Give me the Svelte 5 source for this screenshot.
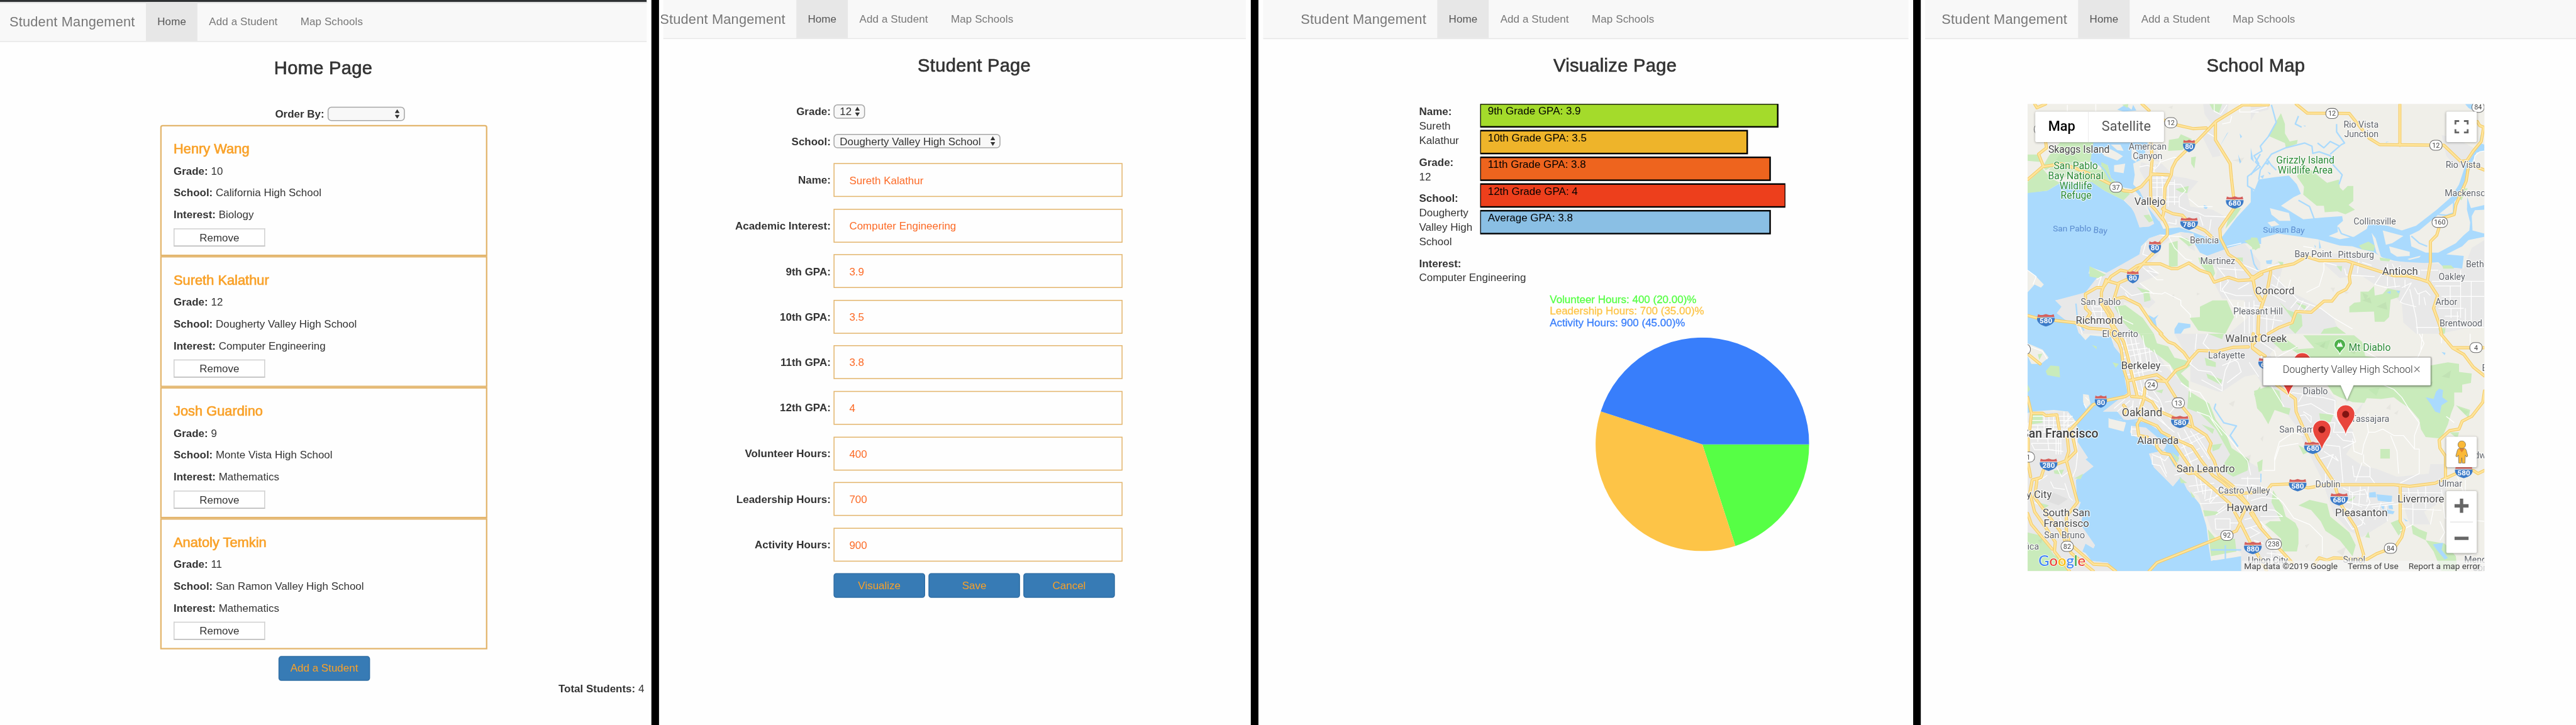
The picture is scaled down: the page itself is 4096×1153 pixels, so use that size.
<script>
  const tabs = ['Home', 'Add a Student', 'Map Schools'];

  const students = [
    { name: 'Henry Wang', grade: 10, school: 'California High School', interest: 'Biology' },
    { name: 'Sureth Kalathur', grade: 12, school: 'Dougherty Valley High School', interest: 'Computer Engineering' },
    { name: 'Josh Guardino', grade: 9, school: 'Monte Vista High School', interest: 'Mathematics' },
    { name: 'Anatoly Temkin', grade: 11, school: 'San Ramon Valley High School', interest: 'Mathematics' }
  ];

  const fields = [
    ['Name:', 'Sureth Kalathur'],
    ['Academic Interest:', 'Computer Engineering'],
    ['9th GPA:', '3.9'],
    ['10th GPA:', '3.5'],
    ['11th GPA:', '3.8'],
    ['12th GPA:', '4'],
    ['Volunteer Hours:', '400'],
    ['Leadership Hours:', '700'],
    ['Activity Hours:', '900']
  ];

  const facts = [
    ['Name:', 'Sureth Kalathur'],
    ['Grade:', '12'],
    ['School:', 'Dougherty Valley High School'],
    ['Interest:', 'Computer Engineering']
  ];

  const bars = [
    { label: '9th Grade GPA: 3.9', gpa: 3.9, fill: '#a4db2b' },
    { label: '10th Grade GPA: 3.5', gpa: 3.5, fill: '#eeb42a' },
    { label: '11th Grade GPA: 3.8', gpa: 3.8, fill: '#ee641e' },
    { label: '12th Grade GPA: 4', gpa: 4, fill: '#ed3f1c' },
    { label: 'Average GPA: 3.8', gpa: 3.8, fill: '#8abfe4' }
  ];

  const hours = [
    { name: 'Volunteer Hours', value: 400, fill: '#56ff45' },
    { name: 'Leadership Hours', value: 700, fill: '#fdc447' },
    { name: 'Activity Hours', value: 900, fill: '#387efb' }
  ];
  const total = hours.reduce((sum, h) => sum + h.value, 0);
  let turned = 0;
  const slices = hours.map((h) => {
    const a = (turned / total) * 2 * Math.PI;
    turned += h.value;
    const b = (turned / total) * 2 * Math.PI;
    const p = (t) => `${(100 * Math.cos(t)).toFixed(3)},${(100 * Math.sin(t)).toFixed(3)}`;
    return { fill: h.fill, d: `M0,0 L${p(a)} A100,100 0 ${b - a > Math.PI ? 1 : 0} 1 ${p(b)} Z` };
  });

  // The map is drawn in four sheets: a (north west), b (north east), c (south west), d (south east).
  const sheet = { a: 'translate(0 0)', b: 'translate(1440 0)', c: 'translate(0 1500)', d: 'translate(1440 1500)' };

  const terrain = [
    ['water', 'a', 'M36,612 160,600 240,552 300,542 350,560 440,545 520,600 640,660 690,710 720,760 740,830 800,825 832,808 790,700 730,620 700,590 640,580 560,520 540,440 430,440 430,296 790,296 800,340 760,400 700,430 710,500 700,560 740,600 800,690 850,740 870,800 890,840 990,830 1060,855 1180,900 1260,890 1350,770 1470,640 1475,590 1505,580 1505,935 1400,930 1300,960 1250,985 1180,1015 1120,990 1090,940 1080,870 1000,860 930,880 870,875 800,900 750,950 740,1000 690,1040 600,1080 540,1120 430,1080 420,1120 480,1150 470,1200 400,1240 330,1270 210,1290 250,1330 220,1370 270,1410 340,1440 360,1505 36,1505Z'],
    ['water', 'a', 'M600,90 650,60 690,90 700,60 720,95 640,102Z M1240,330 1290,240 1300,230Z M1370,240 1385,260 1375,270Z M1440,330 1460,420 1440,400Z M1360,370 1380,420 1370,430Z M1145,690 1170,700 1160,720 1145,710Z M1385,1030 1440,1100 1470,1180 1500,1190 1500,1170 1430,1070 1395,1025Z M795,1380 830,1400 860,1380 840,1410 850,1460 830,1450Z M960,1470 985,1430 1060,1440 1060,1460 1020,1470 1000,1500 960,1500Z'],
    ['water', 'b', 'M0,580 20,605 50,530 150,515 240,505 290,560 315,620 270,640 190,695 250,730 330,780 460,768 575,760 580,790 545,820 548,860 490,885 560,905 650,890 730,840 740,810 860,820 950,850 1040,820 1170,720 1260,640 1310,560 1350,440 1380,400 1440,300 1470,310 1470,350 1420,360 1385,440 1340,600 1280,670 1180,750 1060,850 1000,880 1010,950 1100,990 1180,990 1290,930 1340,880 1375,850 1380,800 1360,720 1362,640 1385,710 1470,690 1470,720 1410,722 1390,760 1395,850 1470,870 1470,890 1370,910 1330,950 1230,1000 1340,1010 1330,1090 1210,1080 1180,1050 1040,1060 900,1040 830,1020 770,985 700,970 640,950 560,945 420,905 280,885 170,870 60,900 0,925Z'],
    ['water', 'b', 'M1348,54 1400,54 1410,100 1370,80Z M95,1040 135,1035 130,1062 100,1060Z M430,905 442,960 430,965Z M400,940 410,950 405,962Z'],
    ['land', 'b', 'M120,710 240,740 250,790 180,790 130,750Z M105,800 150,790 180,815 130,825Z M830,850 960,885 890,930 850,940Z M760,865 785,900 820,1020 790,990Z M870,950 1000,985 1000,1010 920,1015 880,990Z M985,1030 1070,1008 1060,1020 1000,1035Z'],
    ['water', 'c', 'M36,-5 360,-5 400,40 430,10 480,15 560,20 580,80 620,130 640,220 650,300 665,370 640,410 560,460 510,490 600,490 700,545 740,555 730,520 790,560 880,620 960,690 990,760 1000,820 960,840 900,735 870,740 800,755 830,840 950,960 1000,900 1040,980 1120,1070 1160,1200 1175,1330 1190,1430 1380,1400 1380,1500 590,1500 540,1440 440,1430 400,1380 380,1370 400,1320 450,1350 460,1330 400,1270 370,1200 380,1150 350,1110 370,1060 345,1050 340,920 380,885 450,835 400,790 415,780 350,680 355,600 330,540 290,490 200,480 60,490 36,500Z'],
    ['land', 'a', 'M36,1100 90,1140 138,1190 120,1210 80,1190 36,1240Z M470,330 560,340 640,380 600,410 520,380Z M580,440 650,430 640,490 580,480Z M560,310 620,310 640,350 600,345Z M690,320 730,360 720,420 690,400Z'],
    ['land', 'c', 'M36,60 130,100 168,150 120,190 60,190 36,140Z M385,380 420,385 432,440 405,470 385,430Z M545,530 625,540 655,560 640,615 545,590Z'],
    ['urban', 'a', 'M820,440 880,430 960,510 1030,520 1110,540 1040,620 1060,700 1200,720 1290,770 1250,900 1180,900 1040,830 930,820 860,790 790,700 740,600 780,540 740,470 750,420Z'],
    ['urban', 'a', 'M640,650 690,610 780,710 832,808 800,825 740,830 700,720Z M1140,54 1300,54 1290,130 1200,190 1150,120Z M1130,250 1210,200 1250,380 1200,390 1170,330Z M770,310 830,320 870,420 780,400Z'],
    ['urban', 'a', 'M750,960 800,900 860,880 940,900 870,950 860,1000 790,1070 860,1130 740,1180 790,1250 840,1300 800,1340 640,1300 660,1400 750,1500 360,1500 340,1440 270,1410 220,1370 250,1330 210,1290 400,1240 470,1150 600,1080 740,1000Z'],
    ['urban', 'a', 'M1150,1015 1300,960 1400,930 1500,1050 1500,1500 1300,1500 1420,1400 1400,1290 1260,1280 1210,1180 1230,1100Z M990,860 1070,870 1090,980 1050,960Z'],
    ['urban', 'b', 'M0,1130 110,1090 170,1045 200,1080 180,1160 240,1230 420,1320 520,1400 560,1500 0,1500Z'],
    ['urban', 'b', 'M420,990 640,1000 820,1040 1180,1060 1210,1080 1340,1090 1390,960 1470,910 1470,1460 1380,1460 1190,1500 1040,1500 960,1430 950,1310 850,1200 780,1190 690,1130 560,1150 460,1060Z M1200,250 1290,270 1400,330 1350,420 1300,460 1230,380Z M0,54 120,54 110,90 30,110 0,160Z'],
    ['urban', 'c', 'M36,500 60,490 290,490 355,600 350,680 415,780 400,790 450,835 340,920 345,1050 370,1060 350,1110 380,1150 370,1200 460,1330 450,1350 400,1320 380,1370 440,1430 540,1440 590,1494 36,1494Z'],
    ['urban', 'c', 'M570,0 760,0 830,80 900,200 1000,300 1080,400 1040,450 1200,560 1300,700 1420,800 1500,850 1500,1494 1380,1494 1380,1380 1200,1250 1120,1070 1040,980 1000,900 950,960 830,840 800,755 870,740 900,735 960,840 990,760 960,690 880,620 790,560 640,540 600,490 510,490 665,370 640,220 620,130 580,80Z M690,580 780,590 910,700 890,735 700,640 680,620Z'],
    ['urban', 'c', 'M960,0 1500,0 1500,250 1400,270 1250,370 1060,300 1060,180Z'],
    ['land', 'c', 'M1060,340 1200,360 1290,370 1400,270 1500,280 1500,790 1440,790 1330,700 1230,560 1180,440Z M1120,1075 1060,990 1110,1020 1180,1200 1170,1240Z'],
    ['urban', 'd', 'M0,0 220,0 120,130 200,300 280,340 470,340 540,420 520,520 640,600 650,680 600,760 700,830 790,850 920,900 1120,880 1130,820 1230,820 1230,1000 1160,1080 1090,1120 1130,1200 1000,1200 960,1080 900,1070 860,1180 700,1280 620,1240 520,1130 440,900 350,720 300,600 190,450 60,300 0,200Z'],
    ['urban', 'd', 'M0,900 60,980 130,1000 180,1160 60,1180 100,1300 250,1494 0,1494Z M640,510 710,430 680,500Z'],
    ['green', 'a', 'M36,372 110,372 125,420 36,412Z M240,296 450,296 445,330 430,420 240,420 150,470 130,450 170,380Z M36,545 130,460 180,520 240,550 160,600 36,615Z M350,440 500,470 500,420 540,440 560,520 680,620 640,660 520,600 440,545 360,540Z'],
    ['green', 'a', 'M925,280 985,270 1000,245 1070,275 1010,345 920,350Z M1065,390 1095,385 1085,460 1065,430Z M965,590 1050,570 1040,615 1000,610Z M765,755 800,750 825,790 800,800Z M925,930 980,915 980,1075 925,1080Z M1110,1020 1190,1030 1215,1120 1200,1150 1120,1060Z M425,1075 530,1130 480,1150 425,1140Z M720,1205 800,1230 810,1290 770,1300 765,1250Z M580,1330 650,1320 760,1400 830,1500 700,1500 640,1430Z'],
    ['green', 'a', 'M1120,1330 1200,1290 1290,1290 1335,1395 1280,1500 1110,1480 1055,1400 1120,1395Z M1400,915 1480,895 1500,950 1470,975Z M1180,54 1260,54 1240,110 1200,90Z M1330,710 1380,710 1340,770 1280,840 1300,770Z M985,895 1040,900 1075,940 1050,950Z M1350,1020 1390,1020 1390,1050Z M630,60 670,54 665,80Z'],
    ['green', 'b', 'M190,112 215,180 215,240 245,290 295,280 290,305 220,330 215,300 110,255 150,180Z M290,510 340,440 480,550 555,530 560,580 580,600 610,570 645,570 645,665 615,690 655,720 595,748 545,730 465,735 460,695 415,695 330,625 335,575Z M680,945 740,920 780,945 775,980 700,970Z'],
    ['green', 'b', 'M690,1235 740,1235 775,1200 780,1260 830,1250 860,1215 940,1230 930,1270 880,1285 870,1395 840,1425 780,1425 775,1360 620,1365 620,1330 650,1305 690,1300Z M180,1300 230,1350 320,1380 325,1450 280,1500 240,1460 265,1410Z M0,895 30,895 60,960 10,970Z M460,1470 540,1455 600,1500 440,1500Z M540,1075 575,1075 570,1110Z M810,1020 880,1030 870,1045 815,1040Z M1205,1070 1260,1070 1280,1090 1210,1090Z M1340,585 1365,585 1325,660 1310,650Z M1180,1465 1225,1465 1220,1500 1190,1500Z M280,1300 350,1325 340,1350Z M170,1045 205,1050 200,1080Z'],
    ['green', 'c', 'M740,0 830,0 850,60 920,80 960,150 1040,170 1060,200 1000,250 1050,300 1050,350 1000,300 930,190 850,130 780,80Z M1050,360 1180,440 1220,540 1280,620 1320,720 1430,790 1420,860 1330,900 1260,860 1270,820 1310,760 1220,600 1120,500 1040,470Z M150,235 180,200 235,205 240,275 160,260Z M50,490 130,500 130,560 60,570Z'],
    ['green', 'c', 'M36,1250 120,1270 200,1390 280,1440 290,1494 36,1494Z M990,900 1040,940 1000,940Z M1060,990 1090,1030 1070,1030Z M1140,1110 1230,1120 1240,1135 1150,1150Z M1170,1230 1220,1290 1340,1290 1350,1370 1190,1400Z M1195,700 1260,690 1240,725 1200,740Z M1150,150 1220,180 1220,210 1160,200Z M1160,250 1260,290 1250,320 1170,280Z M1500,330 1500,480 1460,380Z M36,320 52,350 36,370Z M1130,570 1210,600 1200,630Z M100,1060 170,1080 130,1110Z M440,70 470,80 470,98Z M330,910 385,880 370,915Z M570,180 610,190 590,215Z M100,130 130,125 110,165Z M940,745 990,780 980,810Z M1170,0 1270,0 1260,35Z M840,360 890,350 880,375Z M200,860 265,855 250,885 205,880Z'],
    ['green', 'd', 'M330,10 650,10 700,50 720,140 1130,200 1240,180 1310,190 1310,240 1390,250 1385,310 1330,320 1330,370 1280,370 1280,450 1260,500 1240,570 1200,660 1100,650 1070,600 1060,540 1000,470 940,430 900,400 820,410 730,405 715,435 640,430 560,400 520,380 480,320 400,300 330,150 260,100 400,90Z M20,360 110,330 180,360 200,460 250,470 240,510 150,480 110,570 70,500 40,470Z M110,30 200,20 300,90 200,110Z'],
    ['green', 'd', 'M430,500 520,510 500,560 440,560Z M300,700 370,740 330,760Z M815,725H875V785H815Z M140,985 200,1080 220,1150 280,1190 300,1230 300,1320 290,1370 200,1370 190,1290 90,1200 120,1180 190,1180 130,1060Z M300,1080 370,1045 480,1070 500,1150 560,1200 620,1250 660,1330 640,1400 560,1300 470,1240 440,1180 380,1110Z M880,1190 940,1165 960,1230 930,1270Z M1010,1200 1060,1230 1110,1250 1100,1300 1020,1260Z M1100,1300 1220,1320 1290,1400 1300,1494 1200,1494 1150,1370Z M1290,450 1380,480 1370,530Z M1250,620 1310,620 1300,660Z M720,1280 740,1245 750,1285Z M40,810 75,790 70,860 50,870Z M610,1050 660,1020 640,1050Z'],
    ['dark', 'a', 'M240,370 330,380 410,470 250,520 170,470Z'],
    ['dark', 'd', 'M400,60 500,40 480,100Z M740,350 810,340 790,390Z M1300,460 1370,490 1350,510Z'],
    ['shade', 'b', 'M700,1290 750,1270 760,1310Z M790,1330 850,1300 860,1350Z M500,1210 530,1210 520,1240Z M580,1230 620,1240 600,1250Z M720,1290 700,1240 740,1260Z'],
    ['shade', 'a', 'M940,1260 960,1250 955,1280Z M1100,1240 1120,1250 1100,1260Z M920,75 950,65 945,85Z M1320,410 1400,390 1380,420Z'],
    ['shade', 'd', 'M430,80 470,50 460,90Z M620,110 680,90 650,130Z M850,470 880,440 880,480Z M1090,320 1150,300 1130,330Z M900,500 930,480 920,510Z M60,660 80,640 75,680Z M800,280 860,250 850,300Z M1200,270 1260,230 1250,280Z M540,1370 600,1340 580,1400Z M340,1330 370,1320 350,1350Z'],
    ['shade', 'c', 'M150,1050 200,1000 290,1040 230,1080Z M100,1300 130,1290 120,1320Z M1400,780 1440,760 1430,840Z M1300,440 1340,420 1330,460Z'],
    ['water', 'd', 'M1100,400 1150,410 1165,365 1185,345 1210,355 1205,400 1240,425 1200,450 1190,500 1160,490 1130,440Z M745,1000 785,995 790,1030 745,1030Z M790,1010 890,1020 885,1060 800,1050Z M810,1075 840,1085 835,1110Z M865,1075 890,1078 895,1105 868,1100Z M845,1105 905,1118 895,1135 850,1130Z M1145,1325 1210,1315 1200,1360 1240,1410 1220,1420 1170,1360Z M1200,115 1225,120 1220,135Z M60,880 68,880 66,935 60,935Z M960,1160 990,1180 975,1180Z'],
    ['water', 'b', 'M855,1240 880,1230 880,1250Z M915,1230 940,1230 930,1248Z M330,190 345,190 343,197Z M850,293 870,290 850,298Z M90,430 120,410 110,440Z M60,510 85,500 75,525Z M105,480 125,490 120,500Z']
  ];

  const creeks = [
    ['b', 'M50,530 60,470 130,370 220,330 340,300 385,320 390,365 430,355 500,380 520,440 575,500 555,560'],
    ['b', 'M130,60 160,170 110,260 60,320 70,350 20,380 50,430 0,500'],
    ['b', 'M500,370 570,310 590,300 540,230 540,180'],
    ['b', 'M1470,330 1440,300 1450,250'],
    ['b', 'M300,130 280,180 320,200'],
    ['b', 'M420,300 460,330 500,290 560,320'],
    ['b', 'M100,400 130,440 160,470'],
    ['b', 'M1010,885 1060,930 1110,950'],
    ['b', 'M300,660 370,700 400,780'],
    ['b', 'M550,830 570,870 640,895'],
    ['b', 'M1276,670 1276,740 1230,755 1180,750'],
    ['b', 'M0,970 20,1060 50,1110'],
    ['a', 'M470,420 520,470 560,540'],
    ['a', 'M560,330 640,380 680,470 700,590'],
    ['a', 'M1500,370 1470,420 1500,450 1420,510 1420,570 1470,600'],
    ['a', 'M340,1310 350,1410 390,1480'],
    ['a', 'M200,1170 290,1150'],
    ['c', 'M1220,440 1210,470 1270,560 1350,580 1310,640 1360,710'],
    ['c', 'M550,530 640,550 740,540'],
    ['c', 'M1190,1360H1380M1200,1430H1370M1280,1330V1490']
  ];

  const streets = [
    ['a', 'M820,520H940M820,550H960M820,580H900M820,640H980M900,670H990M840,440 830,480 900,520M880,500 900,800M850,510V700M920,520V700M960,530V690M910,560H1000L1030,600 990,640V700L1050,730 1110,740 1150,760 1290,765M1050,650 1110,700 1200,700M1190,780 1180,850M920,800 970,810 970,780M1120,760 1140,820'],
    ['a', 'M740,450 790,440 840,460 860,440 870,420 960,390 1000,400M860,320 870,420M286,60V100M465,54V100M1210,54V100L1250,120 1290,60M1260,180 1310,170 1320,130M1370,54V105H1490M1160,230 1210,260'],
    ['a', 'M920,880 960,960 1030,1030 1070,1040M880,880 1000,890 1080,930M780,930 760,1000 820,1020M760,1080 850,1160 890,1160M780,1100 860,1120 800,1080M470,1160 500,1140 480,1200'],
    ['a', 'M430,1300 470,1410M450,1330H530M440,1360H540M450,1400H550M500,1330V1440M620,1200 690,1260 780,1240 880,1250 900,1240 1000,1290 1000,1320 1060,1380 1060,1400M740,1180 830,1250M600,1330 620,1400 700,1440M360,1440 380,1500M650,1240 690,1300'],
    ['a', 'M1230,1080 1300,1170 1260,1220 1330,1330 1400,1400M1250,1230 1350,1260 1450,1260M1340,1080 1350,1160M1240,1090 1400,1100M1250,1170 1250,1230M1360,1220 1430,1180M1330,1330 1480,1340M1360,1300 1350,1400M1400,1300V1500M1430,1300V1500M1460,1290V1500M1380,1060 1500,1110'],
    ['a', 'M36,1100 90,1140 70,1190M1290,950 1380,930'],
    ['b', 'M100,1110 110,1080 180,1060M140,1130 250,1240 300,1290 440,1340 520,1400 640,1470M130,1190 240,1250M180,1140 160,1220M250,1160 230,1240M300,1280 250,1340M330,1290 280,1380M370,1320 330,1360M110,1240 220,1300M20,1320 160,1340M60,1400 200,1420M100,1330V1500M150,1380 130,1500M460,1050V1100L430,1200 350,1240M330,950 390,960 400,990M460,1050 540,1070'],
    ['b', 'M590,1090 600,1130 780,1140M680,1040 670,1120M700,1050 760,1070M860,1060V1110M890,1060 910,1100H1060V1130M940,1070V1110M820,1130 780,1190 850,1210 940,1200M860,1140V1200M900,1140 910,1210M950,1210 1010,1180 940,1300 960,1310 1040,1330M970,1160V1210M1030,1210 1050,1250 1100,1230 1130,1260M1000,1220 1040,1400 1050,1500M1060,1250V1320M1090,1270 1100,1320'],
    ['b', 'M1070,1100H1180M1140,1170H1470M1160,1200H1320M1200,1265H1470M1180,1340H1340M1230,1460H1470M1040,1460H1190M1190,1170V1100M1255,1200V1330M1320,1100V1400M1387,1170V1460M1260,1340V1400M1300,1360V1460M1350,1340V1440M1220,1390H1310'],
    ['b', 'M1400,440 1410,380 1440,355 1470,350M0,100 100,75 110,54'],
    ['c', 'M650,30 740,400M680,10 770,400M620,60 640,180M710,20 790,380M610,80 740,60M630,110 790,90M640,150 820,110M650,220 860,180M660,260 850,220M760,10 790,200 880,240M740,100 760,250M800,90 820,240M830,100 870,200 930,200 950,260M1000,310 1060,350 1060,400M780,290 740,440M820,350 870,420 900,500M700,420 690,530M720,350 860,430M800,400 1000,600M740,440 960,620M840,500 930,600M930,500 980,440M900,430 960,420M580,470 650,410M600,490 680,420M630,510 700,450'],
    ['c', 'M980,620 1080,850M1020,600 1130,800M1060,610 1180,790M1100,640 1190,780M1000,720 1160,640M1020,770 1120,720M1050,810 1140,770M980,680 1130,620M1090,880 1110,990M1120,900 1140,1010M1160,930 1150,1040M1200,960 1180,1060M1240,1000 1180,1070M1050,960 1210,940M1080,1000 1250,970M1120,1070 1290,1060M1150,1050 1260,1010M1220,820 1140,870M960,890 1050,870'],
    ['c', 'M1215,1165H1310V1230H1220ZM1310,1190H1360M1400,1170 1480,1150M1400,1230 1500,1200M1420,1290 1500,1250M1430,1100 1500,1080M1330,1070 1220,1140M1280,1080 1230,1120M1420,1040V900M1380,910H1500M1330,950 1500,960M690,580V640H740M690,600H740M780,640 850,690M820,760 870,780 900,800 930,760M820,770V820L870,830 910,900M870,770 910,880'],
    ['c', 'M1050,350 1120,370 1160,430 1200,540 1290,640 1370,740 1420,800 1440,890M1100,490 1180,520 1260,640M1060,190 1110,230 1190,240 1260,330 1280,230 1320,150 1360,180 1380,240 1290,310M1090,110 1060,190M1170,0 1140,60 1180,100M1100,0 1090,100M1260,200 1380,150M1260,330V360L1130,290'],
    ['c', 'M50,520H320M60,545H330M50,575H300M50,600H290M130,620H280M40,660H220M60,690H250M140,510V620M170,500V640M200,500V640M60,690 80,730 200,730M160,640 170,730 260,740M265,490V590M290,500V580M310,520 270,560M340,550 280,590M340,660 350,760 340,850 320,900M215,660V760M230,660V760M245,660V760M220,840 250,900 290,870M160,890 100,930M180,930 200,970 270,980M270,940 300,1030 320,1050M80,1060 160,1110 220,1120 260,1200M140,1220 200,1260 270,1250M40,560V690M100,580V680'],
    ['c', 'M1430,180 1490,270M400,400 420,420M390,440 405,470M50,80 130,110 160,160'],
    ['d', 'M60,130 160,320 260,380M30,30 150,110 160,150 290,80M280,460 380,440 480,500 530,510M300,430 330,380 260,370M330,490 380,520 380,560M290,520 340,510 380,560M350,390 450,400 530,420V520L560,570M130,330 210,460M480,560 530,560 520,620 640,620 660,680 620,700 580,720M540,630 580,670 650,680M560,710 580,940M430,790 520,760 480,850M460,740 550,800 530,770M500,650 440,700M470,700 560,710M470,880V940'],
    ['d', 'M640,660 650,740 700,760 710,700 740,620 730,540 740,500M740,620 780,620 830,600 900,640 960,640 1010,700 1030,725 1060,725V880L940,940M880,640 920,740 930,880M710,760V810L750,840V900M640,830 650,900H750L780,940M700,810 660,930M330,640 270,620 180,680 150,780 150,860 80,860M150,800 180,710 300,690M830,320 900,350 950,400 1000,480 1060,560 1030,640V720M1230,520 1280,560M700,100 830,170 1050,150 1090,60 1060,0M1080,0 1070,100M1230,60 1210,10M1200,0V60M1380,0V80'],
    ['d', 'M580,970 640,1000 640,1090 610,1130M600,1060 720,1080 900,1060M640,1000 720,980 750,1060 720,1110 700,1200 640,1230M580,1090 650,1120 720,1200M620,960V1010H720M690,960 680,1080M740,960 730,1060M760,1090 930,1070M850,1080 860,1180M820,1060 780,1170M580,1140 640,1230M560,1040 700,1090M940,1100 1200,1110M990,960 1000,1050M1020,1050V1200L940,1240M1050,980 1060,1060M1100,960V1100M940,1000H1200M1150,1100 1130,1200M1200,980 1220,1160 1470,1180M1300,900 1340,1000 1420,1010M1350,920V1050'],
    ['d', 'M0,950 60,960 130,1000 200,1060 270,1160 370,1200 450,1280 450,1390M0,1050 70,1030 180,1040M0,1100 150,1110 200,1150 60,1150M60,1180 110,1240M0,1220 50,1250M20,1300 80,1320M100,1380 200,1390M90,1400V1494M130,1370V1494M30,1420 230,1410M1190,1180 1220,1250 1190,1300M1360,1400 1430,1380']
  ];

  const highways = [
    ['a', 'M80,54 95,78 150,54M150,296 155,330 105,370 135,445 36,530M135,448 250,430 340,460 440,500 560,560 640,600 690,605 750,575 820,495 925,500M755,54 800,95M812,300 820,400 808,520 812,690 840,720 885,780M890,155 990,190 1080,210 1160,205'],
    ['a', 'M1500,60H1390L1220,165 1100,290 1035,345 970,410 945,460 940,500 900,580 895,720 885,770 915,830V880L870,925 830,990 760,1060 700,1130M760,1060 720,1075 670,1110 620,1100 560,1140 510,1210 470,1210 400,1250V1340L430,1370 400,1420M530,1160 500,1240V1310L545,1380 560,1440 590,1500M520,1300 570,1380V1440L610,1500M530,1165 600,1185M680,1150 610,1180 580,1280M590,1280 640,1270 740,1320 820,1440 880,1500'],
    ['a', 'M760,1060 870,1060 940,1090H980L1050,1055 1120,1100 1180,1120 1210,1175 1300,1145 1360,1165 1450,1160 1510,1125M1218,170V280L1310,430 1318,520 1332,640 1335,710 1245,840 1250,900 1300,1000 1360,1040 1455,1155 1470,1240 1500,1290M885,715 950,745 1010,755 1060,810 1150,850 1200,895M36,1385 110,1405 330,1430 420,1465 540,1475 600,1500M1490,1370 1485,1500'],
    ['b', 'M0,60H110M285,54 355,112 620,114 745,270 810,310 1215,314 1320,415 1360,410 1400,350 1450,290 1465,200 1440,190 1425,165M938,54V315M1370,430 1470,470M1370,440 1355,540 1290,690 1280,750 1200,775M1185,830 1170,880 1130,920V1050L1110,1170'],
    ['b', 'M0,1155 60,1115 150,1085 270,1060 350,1015 430,1040 600,1040 820,1110 900,1135 980,1135 1060,1155 1120,1175 1175,1260 1150,1340 1190,1450 1200,1500M10,1140 25,1220 75,1300 50,1380 45,1500M125,1110 105,1220 65,1340M640,1060 620,1140 625,1180 600,1220 550,1245 510,1295H460L380,1365 285,1360 260,1430 180,1460 110,1500'],
    ['c', 'M590,0 625,100 640,220 665,300 675,380 650,395 530,420 450,445 350,555 300,610M560,0 610,60 625,100M610,0 640,50 665,140 690,250 725,390M670,295 850,258 910,300 970,230 1030,205 1060,160 1110,105 1230,110 1330,85 1425,83M775,340 765,420 735,500M750,530 725,570 735,640 790,650M870,0 920,50 960,65 1020,120 1055,170M850,295 905,300 985,430 1060,520 1075,585 1160,640 1190,690 1175,740 1210,800 1240,890 1330,960 1420,1070M640,450 655,470 645,500'],
    ['c', 'M690,395 760,400 820,430 850,480 950,525 1060,585M740,535 850,580 880,620 960,660 1070,710 1130,800 1200,890 1270,940 1370,1030 1420,1080M950,680 1080,870 1200,970 1310,1070 1370,1180 1440,1320 1490,1400M1370,1180 1420,1070 1500,1210M1375,1190 1350,1240 1240,1285 850,1440 800,1494M845,680 850,715 880,750 930,760 980,840 1050,880 1180,860M1240,1000 1320,1010 1500,995M1490,40 1450,40V90L1500,130'],
    ['c', 'M300,600 320,650 340,740 280,800 350,1060 280,1150V1240L300,1320 450,1450 540,1455 590,1494M285,650 295,740 275,800 220,820M135,860 120,905 65,920 50,1000 80,1120 150,1220 210,1310 205,1370 260,1440 300,1494M95,920 80,1030 240,1240 310,1380 450,1494M36,1130 60,1200 190,1355M36,800 55,900M36,400 60,500H130L150,515 220,510 235,600M60,500 50,600M40,130 115,190M40,660V750'],
    ['d', 'M15,0 10,85 90,140M160,320 280,410 285,490 370,680 420,780 520,930 570,1080 660,1220 710,1390 700,1440M0,1000 100,990 130,950 240,945 360,970 480,950H900L1000,960 1160,940 1290,880 1400,860 1430,880 1470,860M1195,0 1270,90 1340,130 1400,210 1470,265M1270,88H1470M1470,360 1460,430 1390,520 1330,550 1310,600 1250,610 1185,670 1190,720 1225,770V910'],
    ['d', 'M940,960V1180L965,1220 950,1280 910,1340 790,1385 730,1420 520,1410 480,1425 430,1410 400,1450M0,1130 60,1220 140,1310 260,1440M0,1320 50,1400 100,1494M20,60 60,10']
  ];

  const interstates = [
    ['80', 1052, 318], ['680', 1339, 674], ['780', 1052, 808], ['80', 837, 956], ['80', 698, 1144], ['580', 151, 1415],
    ['80', 497, 1927], ['580', 994, 2055], ['280', 168, 2324], ['880', 1453, 2848], ['680', 1543, 1690],
    ['680', 1831, 2218], ['580', 1735, 2453], ['680', 1996, 2542], ['580', 2780, 2370]
  ];
  const routes = [
    ['12', 937, 172], ['37', 592, 578], ['12', 1951, 114], ['12', 2605, 314], ['84', 2870, 75], ['160', 2629, 799],
    ['24', 814, 1822], ['13', 984, 1935], ['92', 1290, 2769], ['82', 285, 2838], ['1', 41, 2276], ['', 15, 1598],
    ['4', 2857, 1587], ['238', 1584, 2824], ['84', 2319, 2850], ['', 116, 214]
  ];

  // text, centre x, baseline y, style
  const places = [
    ['Skaggs Island', 359, 362, 'mid'],
    ['San Pablo', 339, 464, 'park'], ['Bay National', 339, 527, 'park'], ['Wildlife', 339, 590, 'park'], ['Refuge', 341, 652, 'park'],
    ['American', 791, 342, 'town'], ['Canyon', 791, 400, 'town'], ['Vallejo', 806, 689, 'city'],
    ['Benicia', 1148, 930, 'town'], ['Martinez', 1232, 1062, 'town'], ['San Pablo', 496, 1317, 'town'],
    ['Richmond', 487, 1436, 'city'], ['El Cerrito', 618, 1521, 'town'], ['Concord', 1591, 1250, 'city'],
    ['Pleasant Hill', 1486, 1380, 'town'], ['Rio Vista', 2134, 205, 'town'], ['Junction', 2136, 262, 'town'],
    ['Grizzly Island', 1783, 429, 'park'], ['Wildlife Area', 1783, 491, 'park'], ['Rio Vista', 2776, 457, 'town'],
    ['Mackenson', 2804, 634, 'town'], ['Collinsville', 2220, 812, 'town'], ['Bay Point', 1833, 1019, 'town'],
    ['Pittsburg', 2102, 1023, 'town'], ['Antioch', 2379, 1131, 'city'], ['Bethel', 2872, 1083, 'town'],
    ['Oakley', 2705, 1160, 'town'], ['Arbor', 2671, 1320, 'town'], ['Brentwood', 2762, 1452, 'town'],
    ['Walnut Creek', 1473, 1551, 'city'], ['Lafayette', 1288, 1656, 'town'], ['Berkeley', 748, 1722, 'city'],
    ['Oakland', 756, 2020, 'big'], ['San Francisco', 239, 2154, 'metro'], ['Alameda', 856, 2192, 'city'],
    ['San Leandro', 1156, 2373, 'city'], ['Castro Valley', 1398, 2504, 'town'], ['Hayward', 1417, 2618, 'city'],
    ['Daly City', 60, 2535, 'city'], ['South San', 280, 2649, 'city'], ['Francisco', 280, 2716, 'city'],
    ['San Bruno', 268, 2785, 'town'], ['Pacifica', 8, 2858, 'town'], ['Union City', 1548, 2946, 'town'],
    ['Diablo', 1846, 1881, 'town'], ['Tassajara', 2191, 2055, 'town'], ['San Ramon', 1762, 2124, 'town'],
    ['Dublin', 1925, 2468, 'town'], ['Pleasanton', 2136, 2648, 'city'], ['Livermore', 2510, 2561, 'city'],
    ['Ulmar', 2696, 2464, 'town'], ['Midway', 2880, 2286, 'town'], ['Sunol', 2090, 2943, 'town'], ['Mendenhall', 2928, 2943, 'town'], ['Springs', 2930, 2992, 'town'],
    ['Mt Diablo', 2188, 1607, 'park'], ['By', 2925, 1736, 'town']
  ];

  const pins = [[1764, 1814], [1677, 1897], [2037, 2142], [1887, 2238]];
</script>

{#snippet nav()}
  <nav>
    <span class="brand">Student Mangement</span>
    {#each tabs as tab, i}
      <span class="tab" class:active={i === 0}>{tab}</span>
    {/each}
  </nav>
{/snippet}

{#snippet arrows()}
  <svg class="arrows" viewBox="0 0 10 20"><path d="M5 0 10 8H0ZM5 20 0 12H10Z" /></svg>
{/snippet}

<div class="stage">
  <div class="board">
    <section class="page home">
      <div class="strip"></div>
      {@render nav()}
      <h1>Home Page</h1>
      <div class="order">
        <b>Order By:</b>
        <span class="select blank">{@render arrows()}</span>
      </div>
      <div class="cards">
        {#each students as s}
          <article>
            <h2>{s.name}</h2>
            <p><b>Grade:</b> {s.grade}</p>
            <p><b>School:</b> {s.school}</p>
            <p><b>Interest:</b> {s.interest}</p>
            <button class="remove">Remove</button>
          </article>
        {/each}
      </div>
      <div class="adding"><button class="primary">Add a Student</button></div>
      <p class="total"><b>Total Students:</b> 4</p>
    </section>

    <section class="page student">
      {@render nav()}
      <h1>Student Page</h1>
      <div class="form">
        <div class="row pick"><b>Grade:</b><span class="select">12{@render arrows()}</span></div>
        <div class="row pick"><b>School:</b><span class="select wide">Dougherty Valley High School{@render arrows()}</span></div>
        {#each fields as [label, value]}
          <div class="row"><b>{label}</b><span class="field">{value}</span></div>
        {/each}
        <div class="actions">
          <button class="primary">Visualize</button>
          <button class="primary">Save</button>
          <button class="primary">Cancel</button>
        </div>
      </div>
    </section>

    <section class="page visualize">
      {@render nav()}
      <h1>Visualize Page</h1>
      <div class="report">
        <dl>
          {#each facts as [term, value], i}
            <div class:oneline={i === 3}><dt>{term}</dt><dd>{value}</dd></div>
          {/each}
        </dl>
        <svg class="bars" viewBox="0 0 400 172">
          {#each bars as bar, i}
            <rect x="0" y={i * 35} width={bar.gpa * 100} height="30" fill={bar.fill} stroke="#000" stroke-width="2" />
            <text x="10" y={i * 35 + 14}>{bar.label}</text>
          {/each}
        </svg>
      </div>
      <div class="pie">
        {#each hours as h}
          <p style:color={h.fill}>{h.name}: {h.value} ({((h.value / total) * 100).toFixed(2)})%</p>
        {/each}
        <svg viewBox="-100 -100 200 200">
          {#each slices as s}<path d={s.d} fill={s.fill} />{/each}
        </svg>
      </div>
    </section>

    <section class="page schools">
      {@render nav()}
      <h1>School Map</h1>
      <div class="map">
        <svg class="tiles" viewBox="36 54 2874 2940">
          {#each terrain as [kind, at, d]}<path class={kind} transform={sheet[at]} {d} />{/each}
          {#each creeks as [at, d]}<path class="creek" transform={sheet[at]} {d} />{/each}
          {#each streets as [at, d]}<path class="street" transform={sheet[at]} {d} />{/each}
          {#each highways as [at, d]}<path class="casing" transform={sheet[at]} {d} />{/each}
          {#each highways as [at, d]}<path class="lane" transform={sheet[at]} {d} />{/each}
          {#each interstates as [n, x, y]}
            <g transform="translate({x} {y})">
              <g transform="scale({n.length > 2 ? 1.45 : 1} 1)">
                <path class="crown" d="M-34,-38 -24,-33 -14,-33 0,-39 14,-33 24,-33 34,-38 37,-20H-37Z" />
                <path class="shield" d="M-38,-15H38C41,15 22,32 0,39C-22,32 -41,15 -38,-15Z" />
              </g>
              <text class="num" y="20">{n}</text>
            </g>
          {/each}
          {#each routes as [n, x, y]}
            <g transform="translate({x} {y})">
              <rect class="route" x={n.length > 2 ? -49 : -39} y="-32" width={n.length > 2 ? 98 : 78} height="64" rx="30" />
              <text class="routeno" y="15">{n}</text>
            </g>
          {/each}
          {#each places as [name, x, y, kind]}<text class="label {kind}" {x} {y}>{name}</text>{/each}
          <text class="label bay" x="316" y="858">San Pablo</text>
          <text class="label bay" x="492" y="868" transform="rotate(5 492 868)">Bay</text>
          <text class="label bay" x="1598" y="864">Suisun</text>
          <text class="label bay" x="1734" y="866" transform="rotate(4 1734 866)">Bay</text>
          <g transform="translate(2000 1630)">
            <path class="peak" d="M0,0C-6,-30 -36,-34 -36,-61A36,36 0 0 1 36,-61C36,-34 6,-30 0,0Z" />
            <path fill="#fff" d="M-20,-48 -7,-76 0,-66 5,-80 20,-48Z" />
          </g>
          {#each pins as [x, y]}
            <g transform="translate({x} {y})">
              <path class="pin" d="M0,0C-5,-60 -57,-80 -57,-137A57,57 0 0 1 57,-137C57,-80 5,-60 0,0Z" />
              <circle cy="-135" r="22" fill="#811411" />
            </g>
          {/each}
          <text class="google" x="104" y="2960" textLength="296">
            <tspan fill="#4285f4">G</tspan><tspan fill="#ea4335">o</tspan><tspan fill="#fbbc05">o</tspan><tspan fill="#4285f4">g</tspan><tspan fill="#34a853">l</tspan><tspan fill="#ea4335">e</tspan>
          </text>
        </svg>
        <div class="control types"><b>Map</b><span>Satellite</span></div>
        <div class="control full">
          <svg viewBox="0 0 30 28"><path d="M2 9V2H10M20 2H28V9M28 19V26H20M10 26H2V19" /></svg>
        </div>
        <div class="control pegman">
          <svg viewBox="0 0 80 144">
            <path d="M20,50H60L67,58 78,98 69,103 62,92 60,142H43L40,108 37,142H21L19,92 11,103 2,98 13,58Z" />
            <path class="scarf" d="M22,50H58L40,75Z" />
            <circle cx="40" cy="26" r="24" />
          </svg>
        </div>
        <div class="control zoomer">
          <svg viewBox="0 0 30 30"><path d="M15 0V30M0 15H30" /></svg>
          <i></i>
          <svg viewBox="0 0 30 30"><path d="M0 15H30" /></svg>
        </div>
        <div class="bubble">
          Dougherty Valley High School
          <svg class="close" viewBox="0 0 12 12"><path d="M1 1 11 11M11 1 1 11" /></svg>
          <svg class="tail" viewBox="0 0 84 98"><path d="M0,0H84L42,96Z" /></svg>
        </div>
        <div class="legal"><span>Map data ©2019 Google</span><span>Terms of Use</span><span>Report a map error</span></div>
      </div>
    </section>
  </div>
</div>

<style>
  :global(body) { background: #fff; }
  .stage { width: 4096px; height: 1153px; overflow: hidden; }
  .board {
    display: flex;
    gap: 16px;
    width: 5402px;
    height: 1522px;
    background: #000;
    transform: scale(0.758238);
    transform-origin: 0 0;
    font: 22.4px/30.3px "Liberation Sans", Arial, sans-serif;
    color: #333;
  }
  .page { box-sizing: border-box; flex: none; background: #fefefe; overflow: hidden; }
  .home { width: 1366px; padding-right: 10px; }
  .student { width: 1241px; padding: 0 10px 0 4px; }
  .visualize { width: 1373px; padding: 0 10px; }
  .schools { width: 1374px; padding-left: 9px; }
  p, h1, h2, dl, dd { margin: 0; }
  button { font: inherit; padding: 0; display: block; }

  .strip { height: 4px; background: #2e3133; border-bottom: 2px solid #ececec; }
  nav { display: flex; height: 80px; background: #f8f8f8; border-bottom: 2px solid #e7e7e7; line-height: 80px; color: #777; white-space: nowrap; }
  .brand { box-sizing: border-box; width: 306px; text-align: right; font-size: 28.8px; letter-spacing: 0.23px; padding-right: 23px; }
  .student nav { margin-left: 5px; clip-path: inset(0 0 0 -5px); }
  .student .brand { margin-left: -27px; }
  .visualize .brand { width: 365px; }
  .schools .brand { width: 321px; }
  .tab { padding: 0 24px; letter-spacing: 0.14px; }
  .tab.active { background: #e7e7e7; color: #555; }

  h1 { margin-top: 31px; font-size: 38.4px; line-height: 47px; height: 46px; font-weight: 400; text-align: center; letter-spacing: 0.4px; -webkit-text-stroke: 0.9px #333; }
  .student h1 { padding-left: 87px; }
  .visualize h1 { padding-left: 123px; }
  .schools h1 { padding-left: 22px; }

  .order { display: flex; justify-content: center; gap: 7px; margin-top: 59px; padding-left: 70px; }
  .order b { line-height: 32px; height: 30px; }
  .select { box-sizing: border-box; display: flex; align-items: center; justify-content: space-between; height: 30px; width: 66px; padding: 2px 9px 0 11px; border: 2px solid #a6a6a6; border-radius: 8px; background: #f8f8f8; white-space: nowrap; line-height: 24px; }
  .select.blank { width: 162px; justify-content: flex-end; }
  .select.wide { width: 350px; }
  .arrows { width: 10px; height: 20px; margin-top: -3px; fill: #333; }

  .cards { width: 686px; margin: 8px auto 0; position: relative; left: 1px; }
  article { box-sizing: border-box; height: 275px; border: 3px solid #e3b56c; padding: 31px 25px 0; }
  article:first-child { border-radius: 5px 5px 0 0; }
  h2 { font-size: 28.8px; line-height: 32px; font-weight: 400; color: #f9a128; -webkit-text-stroke: 0.9px #f9a128; margin-bottom: 8px; }
  article p { line-height: 46px; }
  .remove { width: 192px; height: 38px; line-height: 36px; margin-top: 5px; background: #fff; border: 2px solid #d0d0d0; border-bottom-color: #b5b5b5; color: #333; }
  .primary { box-sizing: border-box; width: 192px; height: 52px; background: #377bb5; border: 2px solid #2e6da4; border-radius: 6px; padding-top: 1px; color: #f9a128; }
  .adding { display: flex; justify-content: center; margin-top: 14px; padding-left: 4px; }
  .total { text-align: right; padding-right: 5px; margin-top: 2px; }

  .form { margin-top: 59px; }
  .row { display: grid; grid-template-columns: 356px auto; column-gap: 6px; justify-content: start; align-items: center; margin-bottom: 24.6px; }
  .row b { text-align: right; padding-top: 2px; }
  .row.pick { margin-bottom: 32px; height: 30px; }
  .field { box-sizing: border-box; width: 606px; height: 71px; border: 2px solid #e3b56c; padding: 1px 0 0 31px; line-height: 67px; color: #fc6a26; }
  .actions { display: flex; gap: 7px; margin-left: 362px; }

  .report { display: flex; margin: 59px 0 0 327px; height: 399px; }
  dl { width: 127.6px; flex: none; padding-top: 1.5px; }
  dl > div { margin-bottom: 15.3px; padding-right: 6px; }
  dl > .oneline { white-space: nowrap; }
  dt { font-weight: 700; }
  .bars { width: 640px; height: 275.2px; flex: none; }
  .bars text { font-size: 14px; fill: #000; }
  .pie { margin-left: 601px; line-height: 24.1px; }
  .pie p { -webkit-text-stroke: 0.4px currentColor; }
  .pie svg { display: block; width: 448px; height: 448px; margin: 19px 0 0 96px; }

  .map { position: relative; width: 958px; height: 980px; margin: 59px 0 0 215px; background: #f0efe9; overflow: hidden; font-family: Roboto, sans-serif; }
  .tiles { display: block; width: 958px; height: 980px; }
  .tiles path { stroke-linejoin: round; }
  .water { fill: #aadafd; }
  .land { fill: #f0efe9; }
  .urban { fill: #e8e8e8; }
  .green { fill: #c9ebbb; }
  .dark { fill: #b9e5ae; opacity: 0.5; }
  .shade { fill: #000; opacity: 0.035; }
  .creek { fill: none; stroke: #aadafd; stroke-width: 9; }
  .street { fill: none; stroke: #fff; stroke-width: 5; }
  .casing { fill: none; stroke: #f4ca62; stroke-width: 19; stroke-linecap: round; }
  .lane { fill: none; stroke: #fee49c; stroke-width: 11; stroke-linecap: round; }
  .crown { fill: #d5605d; }
  .shield { fill: #3c7bc8; }
  .num { fill: #fff; font-size: 46px; font-weight: 700; text-anchor: middle; }
  .route { fill: #fff; stroke: #6b6b6b; stroke-width: 4; }
  .routeno { fill: #444; font-size: 43px; text-anchor: middle; }
  .label { text-anchor: middle; paint-order: stroke; stroke: #fff; stroke-opacity: 0.85; stroke-width: 9; stroke-linejoin: round; }
  .town { font-size: 56px; fill: #60646a; }
  .city { font-size: 66px; fill: #4a4a4a; }
  .big { font-size: 70px; fill: #4a4a4a; }
  .mid { font-size: 62px; fill: #444; }
  .metro { font-size: 77px; font-weight: 500; fill: #3c3c3c; }
  .park { font-size: 62px; fill: #2b8a36; }
  .bay { font-size: 54px; fill: #5b8ccf; stroke: none; }
  .peak { fill: #4fb14c; stroke: #fff; stroke-width: 4; }
  .pin { fill: #e8453c; stroke: #fff; stroke-width: 4; }
  .google { font: 500 94px Lato, sans-serif; paint-order: stroke; stroke: #fff; stroke-width: 6; }

  .control { position: absolute; box-sizing: border-box; background: #fff; border-radius: 3px; box-shadow: 0 1px 5px rgba(0, 0, 0, 0.3); }
  .types { left: 16px; top: 16px; width: 270px; height: 64px; display: flex; font-size: 28.8px; line-height: 60px; }
  .types b { width: 112px; box-sizing: border-box; text-align: center; font-weight: 500; color: #000; border-right: 1px solid #e6e6e6; }
  .types span { flex: 1; text-align: center; color: #565656; }
  .full, .pegman, .zoomer { right: 16px; width: 64px; height: 64px; display: flex; align-items: center; justify-content: center; }
  .full { top: 16px; }
  .full svg { width: 30px; height: 28px; fill: none; stroke: #666; stroke-width: 4; }
  .pegman { top: 698px; }
  .pegman svg { width: 27px; height: 48px; fill: #fbb937; stroke: #6f6a5a; stroke-width: 3; }
  .pegman .scarf { fill: #e08030; stroke: none; }
  .zoomer { top: 812px; height: 130px; flex-direction: column; gap: 18px; }
  .zoomer svg { width: 30px; height: 30px; stroke: #666; stroke-width: 7; }
  .zoomer i { width: 48px; height: 2px; background: #e6e6e6; }
  .bubble { position: absolute; box-sizing: border-box; left: 494px; top: 532px; width: 351px; height: 58px; padding-left: 41px; background: #fff; border-radius: 2px; box-shadow: 0 0 2px 2px rgba(0, 0, 0, 0.2), 0 2px 6px rgba(0, 0, 0, 0.2); font-size: 21.2px; font-weight: 300; line-height: 50px; color: #333; white-space: nowrap; }
  .close { position: absolute; right: 22px; top: 18px; width: 13px; height: 13px; stroke: #666; stroke-width: 1.4; }
  .tail { position: absolute; left: 162px; top: 57px; width: 28px; height: 33px; fill: #fff; filter: drop-shadow(0 3px 2px rgba(0, 0, 0, 0.35)); }
  .legal { position: absolute; right: 0; bottom: 0; height: 22px; display: flex; gap: 21px; padding: 0 9px 0 5px; background: rgba(245, 245, 245, 0.72); font-size: 18px; line-height: 21px; color: #444; white-space: nowrap; }
</style>
